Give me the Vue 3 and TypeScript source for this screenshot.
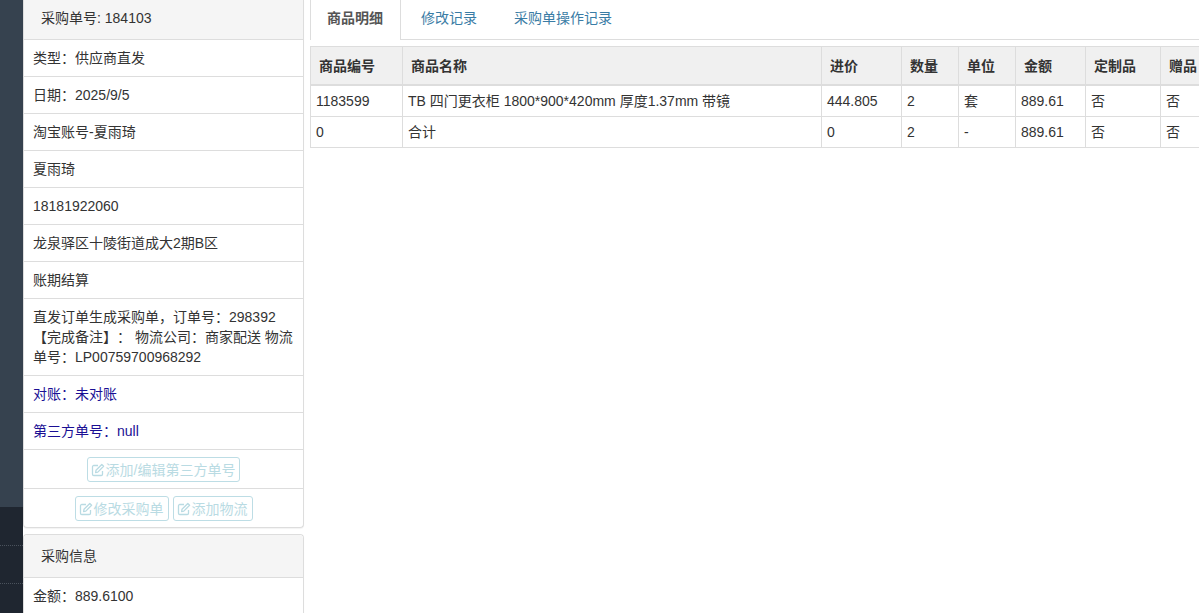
<script setup lang="ts">
type InfoRow = { text: string; link?: boolean }

const orderRows: InfoRow[] = [
  { text: '类型：供应商直发' },
  { text: '日期：2025/9/5' },
  { text: '淘宝账号-夏雨琦' },
  { text: '夏雨琦' },
  { text: '18181922060' },
  { text: '龙泉驿区十陵街道成大2期B区' },
  { text: '账期结算' },
  { text: '直发订单生成采购单，订单号：298392 【完成备注】： 物流公司：商家配送 物流单号：LP00759700968292' },
  { text: '对账：未对账', link: true },
  { text: '第三方单号：null', link: true }
]

const tabs = ['商品明细', '修改记录', '采购单操作记录']

const headers = ['商品编号', '商品名称', '进价', '数量', '单位', '金额', '定制品', '赠品']
const widths = [92, 419, 80, 57, 57, 70, 75, 60]

const rows = [
  ['1183599', 'TB 四门更衣柜 1800*900*420mm 厚度1.37mm 带镜', '444.805', '2', '套', '889.61', '否', '否'],
  ['0', '合计', '0', '2', '-', '889.61', '否', '否']
]
</script>

<template>
  <div class="page">
    <aside class="rail">
      <div class="rail__top" />
      <div class="rail__bottom">
        <div class="rail__item" />
        <div class="rail__item" />
      </div>
    </aside>

    <div class="side">
      <section class="panel panel--first">
        <div class="panel__head">采购单号: 184103</div>
        <div v-for="row in orderRows" :key="row.text" :class="['panel__row', { 'panel__row--link': row.link }]">
          {{ row.text }}
        </div>
        <div class="panel__actions">
          <button type="button" class="btn">
            <svg viewBox="0 0 14 14" fill="none" aria-hidden="true">
              <path d="M11.5 8v3.2a1.3 1.3 0 0 1-1.3 1.3H2.8a1.3 1.3 0 0 1-1.3-1.3V3.8a1.3 1.3 0 0 1 1.3-1.3H7" stroke="currentColor" stroke-width="1.3" />
              <path d="M5 7.3 10.8 1.5l1.8 1.8L6.8 9.1 4.6 9.5z" stroke="currentColor" stroke-width="1.3" stroke-linejoin="round" />
            </svg>添加/编辑第三方单号
          </button>
        </div>
        <div class="panel__actions panel__actions--last">
          <button type="button" class="btn">
            <svg viewBox="0 0 14 14" fill="none" aria-hidden="true">
              <path d="M11.5 8v3.2a1.3 1.3 0 0 1-1.3 1.3H2.8a1.3 1.3 0 0 1-1.3-1.3V3.8a1.3 1.3 0 0 1 1.3-1.3H7" stroke="currentColor" stroke-width="1.3" />
              <path d="M5 7.3 10.8 1.5l1.8 1.8L6.8 9.1 4.6 9.5z" stroke="currentColor" stroke-width="1.3" stroke-linejoin="round" />
            </svg>修改采购单
          </button>
          <button type="button" class="btn">
            <svg viewBox="0 0 14 14" fill="none" aria-hidden="true">
              <path d="M11.5 8v3.2a1.3 1.3 0 0 1-1.3 1.3H2.8a1.3 1.3 0 0 1-1.3-1.3V3.8a1.3 1.3 0 0 1 1.3-1.3H7" stroke="currentColor" stroke-width="1.3" />
              <path d="M5 7.3 10.8 1.5l1.8 1.8L6.8 9.1 4.6 9.5z" stroke="currentColor" stroke-width="1.3" stroke-linejoin="round" />
            </svg>添加物流
          </button>
        </div>
      </section>

      <section class="panel panel--second">
        <div class="panel__head panel__head--second">采购信息</div>
        <div class="panel__row">金额：889.6100</div>
      </section>
    </div>

    <main class="content">
      <nav class="tabs">
        <a v-for="(tab, i) in tabs" :key="tab" :class="['tabs__tab', { 'tabs__tab--active': i === 0 }]">{{ tab }}</a>
      </nav>

      <div class="table-wrap">
        <table class="goods">
          <colgroup>
            <col v-for="(w, i) in widths" :key="i" :style="{ width: `${w}px` }" />
          </colgroup>
          <thead>
            <tr>
              <th v-for="h in headers" :key="h">{{ h }}</th>
            </tr>
          </thead>
          <tbody>
            <tr v-for="row in rows" :key="row[0]">
              <td v-for="(cell, i) in row" :key="i">{{ cell }}</td>
            </tr>
          </tbody>
        </table>
      </div>
    </main>
  </div>
</template>

<style>
html,
body {
  margin: 0;
  overflow: hidden;
}
</style>

<style scoped>
.page {
  display: flex;
  width: 1199px;
  height: 613px;
  overflow: hidden;
  background: #fff;
  color: #333;
  font: 14px/20px 'Liberation Sans', 'Noto Sans CJK SC', sans-serif;
  text-spacing-trim: space-all;
}

.rail {
  display: flex;
  flex: 0 0 23px;
  flex-direction: column;
  background: #36424f;
}

.rail__top {
  flex: 0 0 507px;
}

.rail__bottom {
  flex: 1;
  padding-top: 38px;
  background: #1f2630;
}

.rail__item {
  height: 37px;
  border-top: 1px dotted #4a525c;
}

.side {
  flex: 0 0 281px;
  box-sizing: border-box;
}

.panel {
  background: #fff;
  border: 1px solid #ddd;
  border-radius: 0 0 4px 4px;
  box-shadow: 0 1px 1px rgba(0, 0, 0, 0.05);
}

.panel--first {
  border-top: 0;
}

.panel--second {
  margin-top: 6px;
  border-radius: 4px 4px 0 0;
  border-bottom: 0;
}

.panel__head {
  box-sizing: border-box;
  height: 40px;
  padding: 8px 17px;
  background: #f5f5f5;
  border-bottom: 1px solid #ddd;
}

.panel__head--second {
  height: 43px;
  padding-top: 11px;
  border-radius: 4px 4px 0 0;
}

.panel__row {
  padding: 8px 9px;
  border-bottom: 1px solid #ddd;
  overflow-wrap: anywhere;
}

.panel__row--link {
  color: #1a0f94;
}

.panel__actions {
  display: flex;
  justify-content: center;
  gap: 4px;
  padding: 7px 0 6px;
  border-bottom: 1px solid #ddd;
}

.panel__actions--last {
  border-bottom: 0;
}

.btn {
  display: inline-flex;
  align-items: center;
  box-sizing: border-box;
  height: 25px;
  padding: 0 4px 0 3px;
  border: 1px solid #bddde5;
  border-radius: 3px;
  background: #fff;
  color: #b9dbe3;
  font: inherit;
}

.btn svg {
  width: 14px;
  height: 14px;
  margin-right: 1px;
}

.content {
  flex: 1;
  min-width: 0;
  padding-left: 6px;
}

.tabs {
  display: flex;
  height: 39px;
  border-bottom: 1px solid #ddd;
}

.tabs__tab {
  margin-left: 2px;
  padding: 8px 17px 0 18px;
  color: #3a7ca5;
}

.tabs__tab--active {
  margin-left: 0;
  margin-bottom: -1px;
  padding: 8px 17px 0 16px;
  border-left: 1px solid #ddd;
  border-right: 1px solid #ddd;
  background: #fff;
  color: #555;
  font-weight: 700;
}

.table-wrap {
  margin-top: 6px;
  overflow: hidden;
}

.goods {
  width: 910px;
  table-layout: fixed;
  border-collapse: collapse;
}

.goods th,
.goods td {
  border: 1px solid #ddd;
  text-align: left;
  white-space: nowrap;
  overflow: hidden;
}

.goods th {
  height: 36px;
  padding: 1px 8px 0;
  background: #f0f0f0;
  border-bottom-width: 2px;
  font-weight: 700;
}

.goods td {
  height: 30px;
  padding: 0 5px;
}
</style>
